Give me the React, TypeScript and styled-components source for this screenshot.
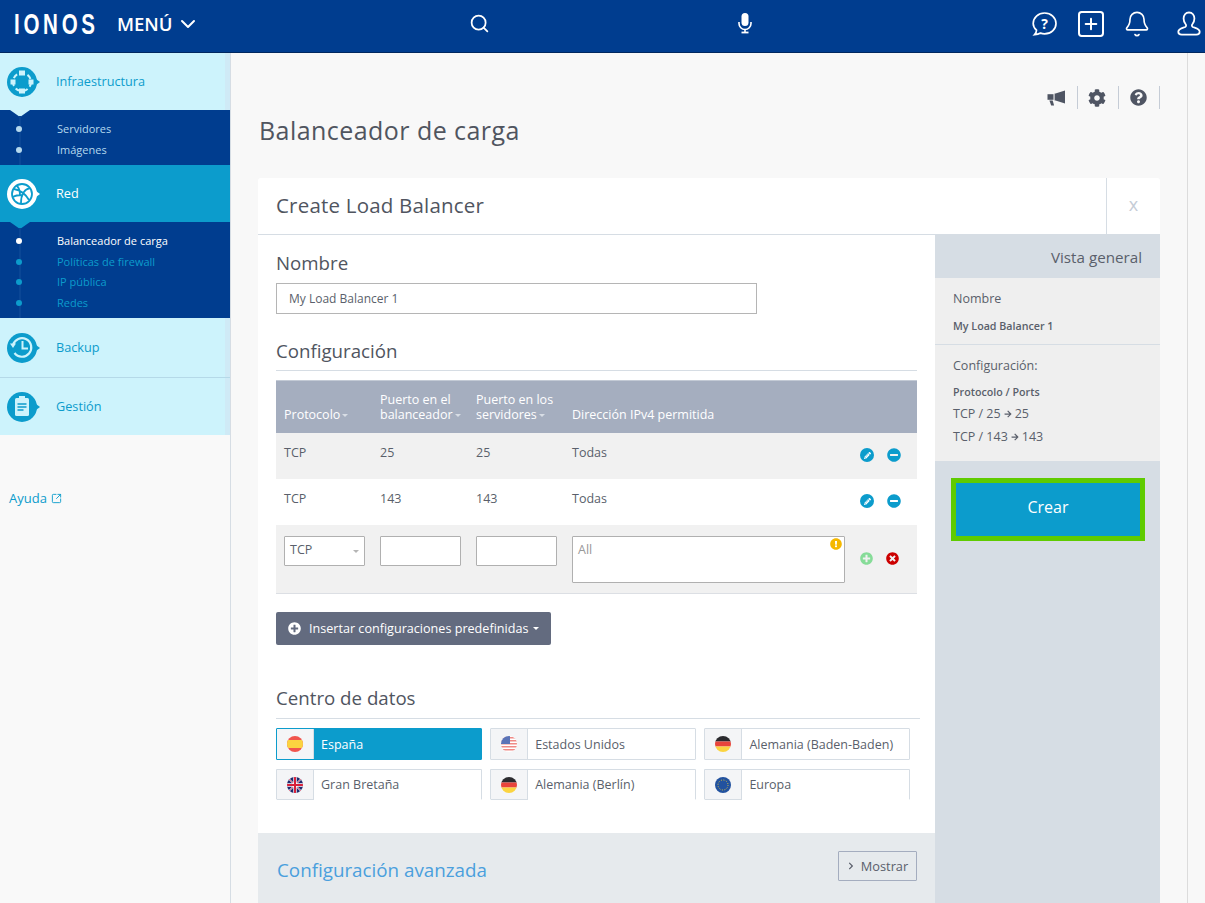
import React, { FC } from 'react';
import styled, { createGlobalStyle } from 'styled-components';
import { Search, SquarePlus, Bell, ChevronDown, SquareArrowOutUpRight } from 'lucide-react';
import {
  FaCog, FaQuestionCircle, FaPencilAlt, FaMinusCircle, FaPlusCircle,
  FaTimesCircle, FaExclamationCircle, FaArrowRight, FaChevronRight,
} from 'react-icons/fa';

const colours = {
  navy: '#003d8f',
  blue: '#0c9ccc',
  sky: '#cdf3fc',
  text: '#5a5f6b',
  line: '#d6dde4',
  grey: '#f1f1f1',
};

const GlobalStyle = createGlobalStyle`
  html, body { margin: 0; padding: 0; background: #f8f8f8; }
  body { font-family: "Open Sans", "Liberation Sans", sans-serif; color: ${colours.text}; }
  * { box-sizing: border-box; }
`;

const Page = styled.div`
  width: 1205px;
  height: 903px;
  overflow: hidden;
  display: flex;
  flex-direction: column;
`;

/* top bar */
const TopBar = styled.header`
  height: 53px;
  flex: none;
  padding-bottom: 5px;
  background: ${colours.navy};
  border-bottom: 1px solid #01285f;
  color: #fff;
  display: grid;
  grid-template-columns: 462px 276px 1fr;
  align-items: center;
`;

const Brand = styled.div`
  display: flex;
  align-items: center;
  padding-left: 14px;
`;

const Logo = styled.span`
  width: 81px;
  font-family: "Liberation Sans", sans-serif;
  font-size: 30px;
  line-height: 30px;
  font-weight: 700;
  letter-spacing: 5.4px;
  transform: scaleX(0.685);
  transform-origin: left center;
`;

const MenuLabel = styled.span`
  margin-left: 22px;
  font-size: 18.5px;
  font-weight: 600;
  display: flex;
  align-items: center;
  gap: 3px;
`;

const BarIcon = styled.div<{ $left?: number }>`
  display: flex;
  align-items: center;
  margin-left: ${p => p.$left ?? 0}px;
`;

const BarGroup = styled.div`
  display: flex;
  align-items: center;
  justify-content: space-between;
`;

const BarRight = styled.div`
  display: flex;
  align-items: center;
  justify-content: flex-end;
  margin-right: 4px;
`;

/* left nav */
const Body = styled.div`
  flex: 1;
  display: flex;
  min-height: 0;
`;

const Sidebar = styled.aside`
  width: 231px;
  flex: none;
  border-right: 1px solid ${colours.line};
  background: #f9f9f9;
`;

const NavItem = styled.div<{ $active?: boolean; $h: number; $line?: boolean }>`
  height: ${p => p.$h}px;
  padding-left: 7px;
  display: flex;
  align-items: center;
  font-size: 12.7px;
  background: ${p => (p.$active ? colours.blue : colours.sky)};
  color: ${p => (p.$active ? '#fff' : colours.blue)};
  box-shadow: ${p => (p.$active ? 'none' : 'inset -5px 0 0 #cfeaf6')};
  border-bottom: ${p => (p.$line ? '1px solid #b5d9e8' : 'none')};
`;

const NavLabel = styled.span`
  margin: 0 0 2px 15px;
`;

const SubNav = styled.div<{ $notch: string; $h: number }>`
  position: relative;
  height: ${p => p.$h}px;
  background: ${colours.navy};
  padding-top: 8px;

  &::before {
    content: '';
    position: absolute;
    left: 10px;
    top: 0;
    border-left: 10px solid transparent;
    border-right: 10px solid transparent;
    border-top: 7px solid ${p => p.$notch};
  }

  &::after {
    content: '';
    position: absolute;
    left: 19px;
    top: 6px;
    bottom: 0;
    width: 2px;
    background: #0a4695;
  }
`;

const SubItem = styled.div<{ $colour: string; $dot: string }>`
  position: relative;
  height: 20.7px;
  line-height: 21px;
  padding-left: 57px;
  font-size: 11px;
  color: ${p => p.$colour};

  &::before {
    content: '';
    position: absolute;
    z-index: 1;
    left: 16px;
    top: 8px;
    width: 6px;
    height: 6px;
    border-radius: 50%;
    background: ${p => p.$dot};
  }
`;

const HelpLink = styled.a`
  display: flex;
  align-items: center;
  gap: 4px;
  margin: 54px 0 0 9px;
  font-size: 13px;
  line-height: 18px;
  color: ${colours.blue};
`;

/* main */
const Main = styled.main`
  width: 957px;
  flex: none;
  border-right: 1px solid #dcdcdc;
  padding: 0 27px 0 27px;
`;

const Tools = styled.div`
  height: 58px;
  padding-top: 33px;
  display: flex;
  justify-content: flex-end;
  color: #4f5563;
`;

const Tool = styled.div`
  width: 41px;
  height: 23px;
  padding-right: 2px;
  display: flex;
  align-items: center;
  justify-content: center;
  border-right: 1px solid #c5ccd6;
`;

const PageTitle = styled.h1`
  margin: 0 0 29px 1px;
  height: 38px;
  font-size: 25px;
  line-height: 38px;
  letter-spacing: 0.45px;
  font-weight: 400;
  color: #50555f;
`;

const Card = styled.section`
  background: #fff;
  border-radius: 3px 3px 0 0;
`;

const CardHead = styled.div`
  height: 57px;
  display: flex;
  align-items: stretch;
  border-bottom: 1px solid ${colours.line};
`;

const CardTitle = styled.h2`
  flex: 1;
  margin: 0;
  padding-left: 18px;
  font-size: 20.5px;
  line-height: 54px;
  letter-spacing: 0.2px;
  font-weight: 400;
  color: #50555f;
`;

const Close = styled.div`
  width: 54px;
  border-left: 1px solid ${colours.line};
  color: #c5ccd6;
  font-size: 18px;
  line-height: 52px;
  text-align: center;
`;

const CardBody = styled.div`
  display: grid;
  grid-template-columns: 677px 225px;
`;

const Form = styled.div`
  padding-top: 14px;
`;

const Block = styled.div`
  padding: 0 18px;
`;

const Heading = styled.h3<{ $rule?: number; $w?: number }>`
  margin: 0;
  height: ${p => p.$rule ?? 28}px;
  width: ${p => p.$w ?? 641}px;
  font-size: 18.7px;
  line-height: 28px;
  font-weight: 400;
  color: #50555f;
  border-bottom: ${p => (p.$rule ? `1px solid ${colours.line}` : 'none')};
`;

const NameInput = styled.div`
  width: 481px;
  height: 31px;
  margin: 6px 0 23px;
  padding-left: 12px;
  border: 1px solid #b5b5b5;
  font-size: 12px;
  line-height: 29px;
`;

const Table = styled.div`
  margin-top: 9px;
  width: 641px;
  border-bottom: 1px solid #dcdfe4;
`;

const Row = styled.div<{ $bg?: string; $h: number }>`
  height: ${p => p.$h}px;
  display: grid;
  grid-template-columns: 96px 96px 96px 1fr 72px;
  background: ${p => p.$bg ?? '#fff'};
  font-size: 12.5px;
`;

const HeadRow = styled(Row)`
  border-top: 1px solid #c3cad5;
  color: #fff;
  line-height: 15px;
  align-items: end;
  padding-bottom: 11px;
`;

const HeadCell = styled.div`
  padding-left: 8px;
`;

const Sort = styled.span`
  display: inline-block;
  margin-left: 2px;
  vertical-align: 2px;
  border-left: 3px solid transparent;
  border-right: 3px solid transparent;
  border-top: 3px solid #d8dde5;
`;

const Cell = styled.div`
  padding: 11px 0 0 8px;
  line-height: 17px;
`;

const Actions = styled.div<{ $top: number }>`
  padding: ${p => p.$top}px 0 0 15px;
  display: flex;
  gap: 13px;
  align-items: flex-start;
`;

const RoundIcon = styled.span<{ $bg: string }>`
  width: 14px;
  height: 14px;
  border-radius: 50%;
  background: ${p => p.$bg};
  color: #fff;
  display: flex;
  align-items: center;
  justify-content: center;
`;

const Field = styled.div<{ $w?: number; $h?: number }>`
  position: relative;
  margin: 11px 0 0 8px;
  width: ${p => (p.$w ? `${p.$w}px` : 'calc(100% - 8px)')};
  height: ${p => p.$h ?? 30}px;
  background: #fff;
  border: 1px solid #b0b0b0;
  border-radius: 1px;
  font-size: 12.5px;
  line-height: 26px;
  padding-left: 5px;
`;

const Caret = styled.span`
  position: absolute;
  right: 5px;
  top: 13px;
  border-left: 3px solid transparent;
  border-right: 3px solid transparent;
  border-top: 3px solid #b5b5b5;
`;

const Warn = styled.span`
  position: absolute;
  right: 2px;
  top: 1px;
  display: flex;
  color: #f5b800;
  background: #fff;
`;

const Placeholder = styled.span`
  color: #999;
`;

const PresetButton = styled.button`
  display: flex;
  align-items: center;
  gap: 8px;
  width: 275px;
  height: 33px;
  margin: 18px 0 39px;
  padding: 0 0 0 12px;
  border: 0;
  border-radius: 2px;
  background: #636b7f;
  color: #fff;
  font-family: inherit;
  font-size: 12.6px;
`;

const PresetCaret = styled(Sort)`
  border-top-color: #fff;
  margin-left: -3px;
  vertical-align: middle;
`;

const Centres = styled.div`
  margin-top: 9px;
  display: grid;
  grid-template-columns: repeat(3, 205.5px);
  column-gap: 8.7px;
  row-gap: 9px;
`;

const Centre = styled.div<{ $on?: boolean; $cut?: boolean }>`
  height: ${p => (p.$cut ? 31 : 32)}px;
  display: flex;
  align-items: center;
  border: 1px solid ${p => (p.$on ? colours.blue : colours.line)};
  border-bottom-color: ${p => (p.$cut ? 'transparent' : p.$on ? colours.blue : colours.line)};
  border-radius: 1px;
  background: ${p => (p.$on ? colours.blue : '#fff')};
  color: ${p => (p.$on ? '#fff' : colours.text)};
  font-size: 12.5px;
`;

const FlagCell = styled.span<{ $cut?: boolean }>`
  width: 37px;
  align-self: stretch;
  margin-bottom: ${p => (p.$cut ? -1 : 0)}px;
  flex: none;
  display: flex;
  align-items: center;
  justify-content: center;
  background: #f4f5f7;
  border-right: 1px solid ${colours.line};
  border-bottom: ${p => (p.$cut ? `1px solid ${colours.line}` : 'none')};
`;

const CentreName = styled.span`
  margin-left: 7px;
`;

const Advanced = styled.div`
  margin-top: 33px;
  height: 110px;
  padding: 18px 18px 0 19px;
  background: #e6eaed;
  display: flex;
  justify-content: space-between;
  align-items: flex-start;
`;

const AdvancedTitle = styled.h3`
  margin: 4px 0 0;
  font-size: 18.8px;
  line-height: 30px;
  font-weight: 400;
  color: #4a9fdd;
`;

const ShowButton = styled.button`
  width: 79px;
  height: 30px;
  display: flex;
  align-items: center;
  justify-content: center;
  gap: 6px;
  padding: 0 0 1px;
  background: transparent;
  border: 1px solid #a4adbf;
  border-radius: 1px;
  color: ${colours.text};
  font-family: inherit;
  font-size: 12.8px;
`;

/* overview */
const Overview = styled.aside`
  background: ${colours.line};
`;

const OverviewHead = styled.div`
  height: 43px;
  padding-right: 18px;
  text-align: right;
  font-size: 15.2px;
  line-height: 44px;
`;

const OverviewInfo = styled.div`
  background: #efefef;
  height: 183px;
`;

const InfoGroup = styled.div<{ $rule?: boolean }>`
  padding: 11px 18px 0;
  height: ${p => (p.$rule ? 67 : 116)}px;
  border-bottom: ${p => (p.$rule ? `1px solid ${colours.line}` : 'none')};
`;

const InfoLabel = styled.div`
  font-size: 12.5px;
  line-height: 20px;
`;

const InfoStrong = styled.div<{ $top: number }>`
  margin: ${p => p.$top}px 0 2px;
  font-size: 10.7px;
  line-height: 16px;
  font-weight: 600;
`;

const InfoLine = styled.div`
  display: flex;
  align-items: center;
  gap: 3px;
  font-size: 12.5px;
  line-height: 23px;
`;

const Create = styled.button`
  display: block;
  width: 194px;
  height: 63px;
  margin: 17px 0 0 16px;
  padding: 0 0 6px;
  background: ${colours.blue};
  border: 5px solid #5fcb00;
  color: #fff;
  font-family: inherit;
  font-size: 16px;
`;

/* drawings */
const Badge: FC<{ active?: boolean; children: React.ReactNode }> = ({ active, children }) => {
  const bg = active ? '#fff' : colours.blue;
  return (
    <svg width="34" height="32" viewBox="0 0 34 32" fill="none" stroke={active ? colours.blue : colours.sky}>
      <path d="M29 13l4 3-4 3z" fill={bg} stroke="none" />
      <circle cx="15" cy="16" r="15" fill={bg} stroke="none" />
      {children}
    </svg>
  );
};

const Flag: FC<{ kind: string; id: string }> = ({ kind, id }) => (
  <svg width="16" height="16" viewBox="0 0 16 16">
    <defs>
      <clipPath id={id}><circle cx="8" cy="8" r="8" /></clipPath>
    </defs>
    <g clipPath={`url(#${id})`}>
      {kind === 'es' && (
        <>
          <rect width="16" height="16" fill="#f0554d" />
          <rect y="4" width="16" height="8" fill="#fbd440" />
        </>
      )}
      {kind === 'de' && (
        <>
          <rect width="16" height="5.5" fill="#2b2b2f" />
          <rect y="5.5" width="16" height="5" fill="#e8453c" />
          <rect y="10.5" width="16" height="5.5" fill="#fbd440" />
        </>
      )}
      {kind === 'us' && (
        <>
          <rect width="16" height="16" fill="#fff" />
          {[1, 4, 7, 10, 13].map(y => <rect key={y} y={y} width="16" height="1.5" fill="#ef8a86" />)}
          <rect width="9" height="8" fill="#5b74b8" />
        </>
      )}
      {kind === 'gb' && (
        <>
          <rect width="16" height="16" fill="#1f2a6e" />
          <path d="M0 0L16 16M16 0L0 16" stroke="#fff" strokeWidth="1.4" />
          <path d="M0 0L16 16M16 0L0 16" stroke="#d8203a" strokeWidth="0.6" />
          <path d="M8 0V16M0 8H16" stroke="#fff" strokeWidth="3.4" />
          <path d="M8 0V16M0 8H16" stroke="#d8203a" strokeWidth="2" />
        </>
      )}
      {kind === 'eu' && (
        <>
          <rect width="16" height="16" fill="#22529f" />
          <circle cx="8" cy="8" r="5" fill="none" stroke="#e3c43c" strokeWidth="1" strokeDasharray="1 1.6" />
        </>
      )}
    </g>
  </svg>
);

const SmallArrow = () => <FaArrowRight size={8} />;

const Actionset: FC<{ top: number }> = ({ top }) => (
  <Actions $top={top}>
    <RoundIcon $bg={colours.blue}><FaPencilAlt size={7} /></RoundIcon>
    <FaMinusCircle size={14} color={colours.blue} />
  </Actions>
);

const centres = [
  { name: 'España', flag: 'es', on: true },
  { name: 'Estados Unidos', flag: 'us' },
  { name: 'Alemania (Baden-Baden)', flag: 'de' },
  { name: 'Gran Bretaña', flag: 'gb', cut: true },
  { name: 'Alemania (Berlín)', flag: 'de', cut: true },
  { name: 'Europa', flag: 'eu', cut: true },
];

const App: FC = () => (
  <Page>
    <GlobalStyle />
    <TopBar>
      <Brand>
        <Logo>IONOS</Logo>
        <MenuLabel>MENÚ <ChevronDown size={24} strokeWidth={2} /></MenuLabel>
      </Brand>
      <BarIcon $left={7}><Search size={21} strokeWidth={2} /></BarIcon>
      <BarGroup>
        <BarIcon $left={0}>
          <svg width="14" height="21" viewBox="0 0 14 21" fill="#fff">
            <rect x="3.5" y="0" width="7" height="13" rx="3.5" />
            <path d="M1 9v1.5a6 6 0 0 0 12 0V9" fill="none" stroke="#fff" strokeWidth="1.6" />
            <rect x="6.2" y="16" width="1.6" height="3" />
            <rect x="3.5" y="18.6" width="7" height="1.8" />
          </svg>
        </BarIcon>
        <BarRight>
          <svg width="25" height="25" viewBox="0 0 25 25" fill="none" stroke="#fff" strokeWidth="1.7">
            <path d="M4.5 19.2C2.6 17.4 1.2 15.2 1.2 12.4 1.2 6.6 6.2 2 12.6 2s11.4 4.6 11.4 10.4-5 10.4-11.4 10.4c-1.4 0-2.8-.2-4-.7-1.7 1-3.5 1.5-6 1.6 1-1 1.8-2.6 1.9-4.5z" />
            <text x="12.6" y="17.5" textAnchor="middle" fontSize="14" fontWeight="700" fill="#fff" stroke="none" fontFamily="Open Sans">?</text>
          </svg>
          <BarIcon $left={18}><SquarePlus size={32} strokeWidth={1.5} /></BarIcon>
          <BarIcon $left={16}><Bell size={28} strokeWidth={1.4} /></BarIcon>
          <BarIcon $left={26}>
            <svg width="24" height="25" viewBox="0 0 24 25" fill="none" stroke="#fff" strokeWidth="1.8">
              <path d="M12 1.5c-3.4 0-5.4 2.6-5.4 6 0 2.6 1 4.7 2.2 6 .6.8.3 2-.6 2.5-2 1-6.9 1.7-6.9 4.8 0 1.9 1.5 2.9 3.4 2.9h14.6c1.9 0 3.4-1 3.4-2.9 0-3.1-4.9-3.8-6.9-4.8-.9-.5-1.2-1.7-.6-2.5 1.2-1.3 2.2-3.4 2.2-6 0-3.4-2-6-5.4-6z" />
            </svg>
          </BarIcon>
        </BarRight>
      </BarGroup>
    </TopBar>
    <Body>
      <Sidebar>
        <NavItem $h={57}>
          <Badge>
            <circle cx="15" cy="16" r="9" strokeWidth="2" strokeDasharray="5 3" />
            <rect x="12" y="4.5" width="6" height="5" fill={colours.sky} stroke="none" />
            <rect x="12" y="22.5" width="6" height="5" fill={colours.sky} stroke="none" />
            <rect x="3.5" y="13.5" width="5" height="5" fill={colours.sky} stroke="none" />
            <rect x="21.5" y="13.5" width="5" height="5" fill={colours.sky} stroke="none" />
          </Badge>
          <NavLabel>Infraestructura</NavLabel>
        </NavItem>
        <SubNav $notch={colours.sky} $h={55}>
          <SubItem $colour="#b5d9ee" $dot="#b5d9ee">Servidores</SubItem>
          <SubItem $colour="#b5d9ee" $dot="#b5d9ee">Imágenes</SubItem>
        </SubNav>
        <NavItem $h={57} $active>
          <Badge active>
            <circle cx="15" cy="16" r="10" strokeWidth="1.8" />
            <path d="M7 11c5 1 11 4 15 11M23 10c-5 1-9 6-9 15M10 8c2 2 3 5 3 9M6 19c3-2 6-2 9-2" strokeWidth="1.8" />
          </Badge>
          <NavLabel>Red</NavLabel>
        </NavItem>
        <SubNav $notch={colours.blue} $h={96}>
          <SubItem $colour="#fff" $dot="#fff">Balanceador de carga</SubItem>
          <SubItem $colour={colours.blue} $dot={colours.blue}>Políticas de firewall</SubItem>
          <SubItem $colour={colours.blue} $dot={colours.blue}>IP pública</SubItem>
          <SubItem $colour={colours.blue} $dot={colours.blue}>Redes</SubItem>
        </SubNav>
        <NavItem $h={60} $line>
          <Badge>
            <path d="M6 13a9.3 9.3 0 1 1 1.5 8" strokeWidth="2.2" />
            <path d="M3 11.5h6L6 16z" fill={colours.sky} stroke="none" />
            <path d="M15.5 9v7.5h5.5" strokeWidth="2" />
          </Badge>
          <NavLabel>Backup</NavLabel>
        </NavItem>
        <NavItem $h={57}>
          <Badge>
            <rect x="8" y="7" width="14" height="18" rx="1.5" fill={colours.sky} stroke="none" />
            <rect x="12" y="5" width="6" height="3" fill={colours.sky} stroke="none" />
            <path d="M10.5 13h9M10.5 16h9M10.5 19h6" stroke={colours.blue} strokeWidth="1.6" />
          </Badge>
          <NavLabel>Gestión</NavLabel>
        </NavItem>
        <HelpLink>Ayuda <SquareArrowOutUpRight size={11} strokeWidth={2} /></HelpLink>
      </Sidebar>
      <Main>
        <Tools>
          <Tool>
            <svg width="19" height="16" viewBox="0 0 19 16" fill="currentColor">
              <path d="M18 0.5v13L8.5 10.6H7.6V3.4h.9z" />
              <path d="M0.5 4.2h6v5.6h-6z" />
              <path d="M2.4 10.4h3.3l1.4 5H4.2z" />
            </svg>
          </Tool>
          <Tool><FaCog size={18} /></Tool>
          <Tool><FaQuestionCircle size={17} /></Tool>
        </Tools>
        <PageTitle>Balanceador de carga</PageTitle>
        <Card>
          <CardHead>
            <CardTitle>Create Load Balancer</CardTitle>
            <Close>x</Close>
          </CardHead>
          <CardBody>
            <Form>
              <Block>
                <Heading>Nombre</Heading>
                <NameInput>My Load Balancer 1</NameInput>
                <Heading $rule={34}>Configuración</Heading>
                <Table>
                  <HeadRow $h={53} $bg="#a5aebf">
                    <HeadCell>Protocolo<Sort /></HeadCell>
                    <HeadCell>Puerto en el balanceador<Sort /></HeadCell>
                    <HeadCell>Puerto en los servidores<Sort /></HeadCell>
                    <HeadCell>Dirección IPv4 permitida</HeadCell>
                    <span />
                  </HeadRow>
                  <Row $h={46} $bg={colours.grey}>
                    <Cell>TCP</Cell><Cell>25</Cell><Cell>25</Cell><Cell>Todas</Cell>
                    <Actionset top={15} />
                  </Row>
                  <Row $h={46}>
                    <Cell>TCP</Cell><Cell>143</Cell><Cell>143</Cell><Cell>Todas</Cell>
                    <Actionset top={15} />
                  </Row>
                  <Row $h={68} $bg={colours.grey}>
                    <Field $w={81}>TCP<Caret /></Field>
                    <Field $w={81} />
                    <Field $w={81} />
                    <Field $h={47}>
                      <Placeholder>All</Placeholder>
                      <Warn><FaExclamationCircle size={12} /></Warn>
                    </Field>
                    <Actions $top={27}>
                      <FaPlusCircle size={13} color="#86dc98" />
                      <FaTimesCircle size={13} color="#cc0000" />
                    </Actions>
                  </Row>
                </Table>
                <PresetButton>
                  <FaPlusCircle size={13} />
                  Insertar configuraciones predefinidas
                  <PresetCaret />
                </PresetButton>
                <Heading $rule={35} $w={644}>Centro de datos</Heading>
                <Centres>
                  {centres.map((c, i) => (
                    <Centre key={c.name} $on={c.on} $cut={c.cut}>
                      <FlagCell $cut={c.cut}><Flag kind={c.flag} id={`flag-${i}`} /></FlagCell>
                      <CentreName>{c.name}</CentreName>
                    </Centre>
                  ))}
                </Centres>
              </Block>
              <Advanced>
                <AdvancedTitle>Configuración avanzada</AdvancedTitle>
                <ShowButton><FaChevronRight size={8} /> Mostrar</ShowButton>
              </Advanced>
            </Form>
            <Overview>
              <OverviewHead>Vista general</OverviewHead>
              <OverviewInfo>
                <InfoGroup $rule>
                  <InfoLabel>Nombre</InfoLabel>
                  <InfoStrong $top={9}>My Load Balancer 1</InfoStrong>
                </InfoGroup>
                <InfoGroup>
                  <InfoLabel>Configuración:</InfoLabel>
                  <InfoStrong $top={8}>Protocolo / Ports</InfoStrong>
                  <InfoLine>TCP / 25 <SmallArrow /> 25</InfoLine>
                  <InfoLine>TCP / 143 <SmallArrow /> 143</InfoLine>
                </InfoGroup>
              </OverviewInfo>
              <Create>Crear</Create>
            </Overview>
          </CardBody>
        </Card>
      </Main>
    </Body>
  </Page>
);

export default App;
